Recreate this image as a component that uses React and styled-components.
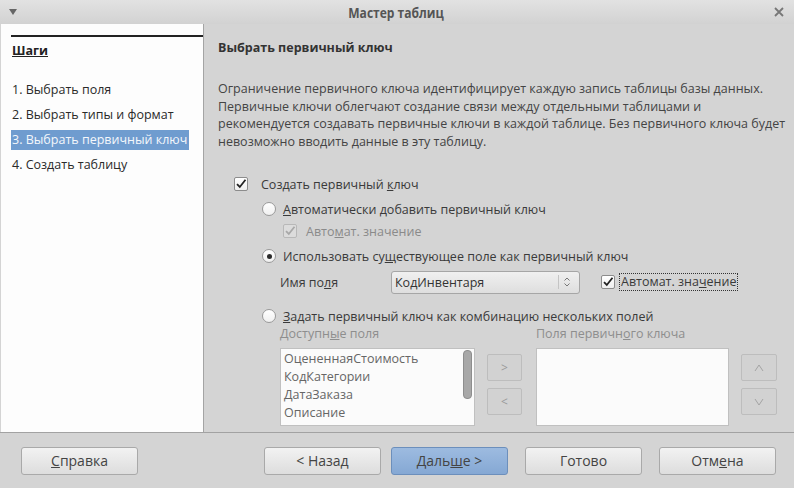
import React from 'react';
import styled, { createGlobalStyle } from 'styled-components';

const Global = createGlobalStyle`
  html, body { margin: 0; padding: 0; background: #d4d4d4; }
  body { font-family: "Open Sans", "DejaVu Sans", sans-serif; }
`;

const Window = styled.div`
  width: 794px;
  height: 488px;
  display: flex;
  flex-direction: column;
  background: #d4d4d4;
  color: #3a3a3a;
  font-size: 12.5px;
  overflow: hidden;
`;

const TitleBar = styled.div`
  height: 24px;
  flex: none;
  display: flex;
  align-items: center;
  justify-content: space-between;
  padding: 0 10px 0 8px;
  background: linear-gradient(#e2e2e2, #d2d2d2);
  font-family: "Liberation Sans Narrow", "Open Sans", sans-serif;
  font-weight: bold;
  font-size: 14px;
  color: #555;
`;

const TitleText = styled.span`
  flex: 1;
  text-align: center;
  transform: scaleX(0.86);
`;

const Body = styled.div`
  flex: 1;
  display: flex;
  min-height: 0;
`;

const Sidebar = styled.div`
  width: 203px;
  flex: none;
  margin-left: 1px;
  background: #fdfdfd;
  border-right: 1px solid #a4a4a4;
  padding: 11px 0 0 10px;
  box-sizing: border-box;
`;

const SideRule = styled.div`
  border-top: 2px solid #222;
`;

const StepsTitle = styled.div`
  margin: 4px 0 0 1px;
  font-weight: bold;
  text-decoration: underline;
  color: #222;
  height: 20px;
  line-height: 20px;
`;

const StepList = styled.div`
  display: flex;
  flex-direction: column;
  gap: 5px;
  margin-top: 19px;
`;

const Step = styled.div`
  width: 177px;
  height: 20px;
  line-height: 20px;
  padding-left: 1px;
  white-space: nowrap;
  color: ${p => (p.$active ? '#f4f7fb' : '#2a2a2a')};
  background: ${p => (p.$active ? '#6f9ccf' : 'transparent')};
`;

const Main = styled.div`
  flex: 1;
  padding: 14px 0 0 14px;
  overflow: hidden;
`;

const Heading = styled.div`
  font-weight: bold;
  color: #333;
  line-height: 20px;
`;

const Para = styled.p`
  margin: 22px 0 0;
  line-height: 17.5px;
  color: #444;
  width: 574px;
`;

const Options = styled.div`
  margin: 24px 0 0 16px;
  display: flex;
  flex-direction: column;
`;

const Row = styled.div`
  display: flex;
  align-items: center;
  height: 20px;
  margin-top: ${p => p.$mt || 0}px;
  padding-left: ${p => p.$indent || 0}px;
  gap: ${p => p.$gap ?? 7}px;
  color: ${p => (p.$muted ? '#8a8a8a' : '#3a3a3a')};
  white-space: nowrap;
`;

const Box = styled.span`
  width: 12px;
  height: 12px;
  flex: none;
  border: 1px solid ${p => (p.$muted ? '#b8b8b8' : '#8c8c8c')};
  border-radius: 2px;
  background: ${p => (p.$muted ? '#dcdcdc' : 'linear-gradient(#ffffff, #eeeeee)')};
  display: flex;
  align-items: center;
  justify-content: center;
`;

const Radio = styled.span`
  width: 12px;
  height: 12px;
  flex: none;
  border: 1px solid #9a9a9a;
  border-radius: 50%;
  background: linear-gradient(#ffffff, #f0f0f0);
  display: flex;
  align-items: center;
  justify-content: center;
  &::after {
    content: '';
    width: 5px;
    height: 5px;
    border-radius: 50%;
    background: ${p => (p.$on ? '#2a2a2a' : 'transparent')};
  }
`;

const Check = ({ muted }) => (
  <Box $muted={muted}>
    <svg width="12" height="12" viewBox="0 0 12 12">
      <path d="M2 6.2 L4.8 9 L10.5 1.8" fill="none" stroke={muted ? '#a8a8a8' : '#222'} strokeWidth="1.8" />
    </svg>
  </Box>
);

const FieldLabel = styled.span`
  width: 111px;
`;

const Select = styled.div`
  width: 189px;
  height: 23px;
  box-sizing: border-box;
  border: 1px solid #a6a6a6;
  border-radius: 3px;
  background: linear-gradient(#f0f0f0, #dedede);
  display: flex;
  align-items: center;
  padding-left: 3px;
  color: #333;
`;

const SelectText = styled.span`
  flex: 1;
`;

const Spin = styled.span`
  width: 16px;
  height: 14px;
  border-left: 1px solid #c4c4c4;
  display: flex;
  align-items: center;
  justify-content: center;
  margin-right: 4px;
`;

const Focus = styled.span`
  outline: 1px dotted #333;
  padding: 0 1px;
  line-height: 16px;
`;

const AutoField = styled.div`
  display: flex;
  align-items: center;
  gap: 5px;
  margin-left: 21px;
`;

const ListLabels = styled.div`
  display: flex;
  padding-left: 46px;
  color: #8e8e8e;
  height: 20px;
  line-height: 20px;
  margin-top: -2px;
  white-space: nowrap;
`;

const ListLabel = styled.span`
  width: ${p => p.$w}px;
`;

const Lists = styled.div`
  display: flex;
  align-items: flex-start;
  padding-left: 46px;
  margin-top: 4px;
`;

const ListBox = styled.div`
  width: ${p => p.$w}px;
  height: 78px;
  box-sizing: border-box;
  border: 1px solid #c0c0c0;
  background: #fbfbfb;
  position: relative;
  padding: 1px 0 0 3px;
  flex: none;
`;

const ListItem = styled.div`
  height: 18px;
  line-height: 18px;
  color: #666;
  white-space: nowrap;
`;

const Thumb = styled.div`
  position: absolute;
  right: 2px;
  top: 1px;
  width: 7px;
  height: 47px;
  border-radius: 4px;
  background: #a8a8a8;
  border: 1px solid #8e8e8e;
`;

const MoveCol = styled.div`
  display: flex;
  flex-direction: column;
  gap: 7px;
  margin: 6px ${p => p.$mr || 0}px 0 ${p => p.$ml}px;
  flex: none;
`;

const SmallBtn = styled.div`
  width: ${p => p.$w || 35}px;
  height: 27px;
  box-sizing: border-box;
  border: 1px solid #bdbdbd;
  border-radius: 2px;
  background: #d2d2d2;
  color: #9a9a9a;
  display: flex;
  align-items: center;
  justify-content: center;
  font-size: 12px;
`;

const Footer = styled.div`
  height: 56px;
  flex: none;
  border-top: 1px solid #a2a2a2;
  display: flex;
  align-items: center;
  padding: 0 18px 0 21px;
  gap: 10px;
  box-sizing: border-box;
`;

const Button = styled.div`
  width: 117px;
  height: 28px;
  box-sizing: border-box;
  border: 1px solid ${p => (p.$primary ? '#6c8fbc' : '#a9a9a9')};
  border-radius: 3px;
  background: ${p => (p.$primary ? 'linear-gradient(#9dbbe0, #85a8d4)' : 'linear-gradient(#f2f2f2, #dddddd)')};
  display: flex;
  align-items: center;
  justify-content: center;
  font-family: "Liberation Sans Narrow", "Open Sans", sans-serif;
  font-size: 14px;
  color: #444;
  margin-left: ${p => p.$ml || 0}px;
  margin-right: ${p => p.$mr || 0}px;
`;

const Chevron = ({ up }) => (
  <svg width="10" height="8" viewBox="0 0 10 8">
    <path d={up ? 'M1 7 L5 1 L9 7' : 'M1 1 L5 7 L9 1'} fill="none" stroke="#a4a4a4" strokeWidth="1" />
  </svg>
);

export default function App() {
  return (
    <Window>
      <Global />
      <TitleBar>
        <svg width="10" height="8" viewBox="0 0 10 8"><path d="M1 1 L9 1 L5 7 Z" fill="#666" /></svg>
        <TitleText>Мастер таблиц</TitleText>
        <svg width="10" height="10" viewBox="0 0 10 10"><path d="M1 1 L9 9 M9 1 L1 9" stroke="#777" strokeWidth="1.8" /></svg>
      </TitleBar>
      <Body>
        <Sidebar>
          <SideRule />
          <StepsTitle>Шаги</StepsTitle>
          <StepList>
            <Step>1. Выбрать поля</Step>
            <Step>2. Выбрать типы и формат</Step>
            <Step $active>3. Выбрать первичный ключ</Step>
            <Step>4. Создать таблицу</Step>
          </StepList>
        </Sidebar>
        <Main>
          <Heading>Выбрать первичный ключ</Heading>
          <Para>
            Ограничение первичного ключа идентифицирует каждую запись таблицы базы данных.
            Первичные ключи облегчают создание связи между отдельными таблицами и
            рекомендуется создавать первичные ключи в каждой таблице. Без первичного ключа будет
            невозможно вводить данные в эту таблицу.
          </Para>
          <Options>
            <Row $gap={13}>
              <Check />
              <span>Создать первичный <u>к</u>люч</span>
            </Row>
            <Row $indent={28} $gap={7} $mt={5}>
              <Radio />
              <span><u>А</u>втоматически добавить первичный ключ</span>
            </Row>
            <Row $indent={49} $gap={9} $mt={2} $muted>
              <Check muted />
              <span>Авто<u>м</u>ат. значение</span>
            </Row>
            <Row $indent={28} $gap={7} $mt={5}>
              <Radio $on />
              <span>Использовать су<u>щ</u>ествующее поле как первичный ключ</span>
            </Row>
            <Row $indent={46} $gap={0} $mt={6}>
              <FieldLabel>Имя по<u>л</u>я</FieldLabel>
              <Select>
                <SelectText>КодИнвентаря</SelectText>
                <Spin>
                  <svg width="6" height="10" viewBox="0 0 6 10"><path d="M0.5 3.5 L3 1 L5.5 3.5 M0.5 6.5 L3 9 L5.5 6.5" fill="none" stroke="#777" strokeWidth="1" /></svg>
                </Spin>
              </Select>
              <AutoField>
                <Check />
                <Focus>Автомат. зна<u>ч</u>ение</Focus>
              </AutoField>
            </Row>
            <Row $indent={28} $gap={7} $mt={14}>
              <Radio />
              <span><u>З</u>адать первичный ключ как комбинацию нескольких полей</span>
            </Row>
            <ListLabels>
              <ListLabel $w={256}>Доступн<u>ы</u>е поля</ListLabel>
              <ListLabel>Поля первичн<u>о</u>го ключа</ListLabel>
            </ListLabels>
            <Lists>
              <ListBox $w={195}>
                <ListItem>ОцененнаяСтоимость</ListItem>
                <ListItem>КодКатегории</ListItem>
                <ListItem>ДатаЗаказа</ListItem>
                <ListItem>Описание</ListItem>
                <Thumb />
              </ListBox>
              <MoveCol $ml={12} $mr={14}>
                <SmallBtn>&gt;</SmallBtn>
                <SmallBtn>&lt;</SmallBtn>
              </MoveCol>
              <ListBox $w={193} />
              <MoveCol $ml={12}>
                <SmallBtn $w={36}><Chevron up /></SmallBtn>
                <SmallBtn $w={36}><Chevron /></SmallBtn>
              </MoveCol>
            </Lists>
          </Options>
        </Main>
      </Body>
      <Footer>
        <Button $mr={116}><span><u>С</u>правка</span></Button>
        <Button>&lt; Назад</Button>
        <Button $primary $mr={7}><span>Даль<u>ш</u>е &gt;</span></Button>
        <Button>Готово</Button>
        <Button $ml={7}><span>Отм<u>е</u>на</span></Button>
      </Footer>
    </Window>
  );
}
